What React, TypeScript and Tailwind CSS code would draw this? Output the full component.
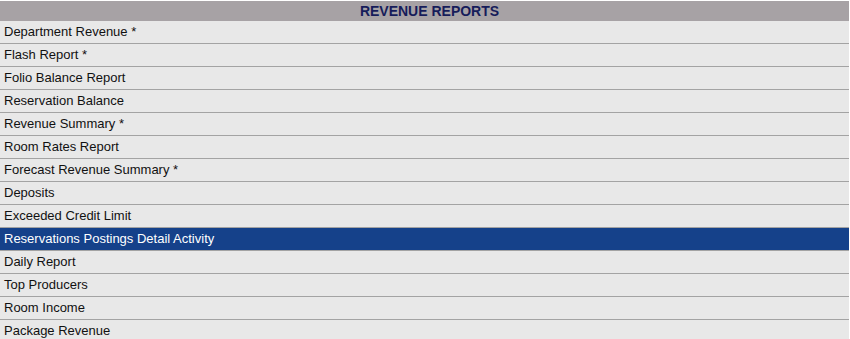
import React from "react";

const items = [
  "Department Revenue *",
  "Flash Report *",
  "Folio Balance Report",
  "Reservation Balance",
  "Revenue Summary *",
  "Room Rates Report",
  "Forecast Revenue Summary *",
  "Deposits",
  "Exceeded Credit Limit",
  "Reservations Postings Detail Activity",
  "Daily Report",
  "Top Producers",
  "Room Income",
  "Package Revenue",
];

export default function App() {
  return (
    <div className="w-[850px] h-[339px] overflow-hidden bg-white pt-px" style={{ fontFamily: '"Liberation Sans", Arial, sans-serif' }}>
      <div className="w-[849px]">
        <div className="h-[20px] bg-[#a7a2a5] flex items-center justify-center pl-[10px] text-[14px] font-bold text-[#161c5a]">
          REVENUE REPORTS
        </div>
        {items.map((t, i) => {
          const sel = i === 9;
          return (
            <div
              key={t}
              className={
                sel
                  ? "h-[23px] border-b border-[#a3a3a3] bg-[#15418a] text-white flex items-center pl-[4px] text-[13px]"
                  : "h-[23px] border-b border-[#a3a3a3] bg-[#e8e8e8] text-[#111] flex items-center pl-[4px] text-[13px]"
              }
            >
              {t}
            </div>
          );
        })}
      </div>
    </div>
  );
}
